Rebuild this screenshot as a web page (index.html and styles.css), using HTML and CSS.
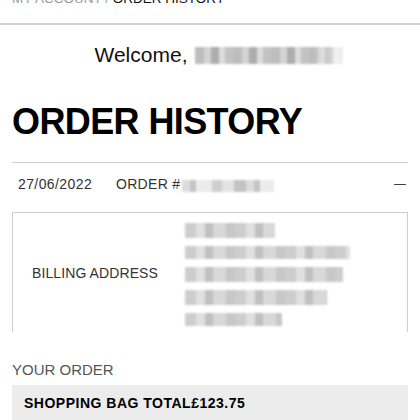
FILE: index.html
```html
<!DOCTYPE html>
<html lang="en">
<head>
<meta charset="utf-8">
<title>Order History</title>
<link rel="stylesheet" href="styles.css">
</head>
<body>
  <nav class="crumbs"><span class="crumb-muted">MY ACCOUNT / </span><span class="crumb-current">ORDER HISTORY</span></nav>
  <div class="rule"></div>
  <main class="page">
    <p class="welcome">Welcome, <span class="blur blur-name"></span></p>
    <h1 class="title">ORDER HISTORY</h1>
    <section class="order">
      <div class="order-head">
        <span class="order-date">27/06/2022</span>
        <span class="order-no">ORDER # <span class="blur blur-no"></span></span>
        <span class="toggle"></span>
      </div>
      <div class="billing">
        <div class="billing-label">BILLING ADDRESS</div>
        <div class="address">
          <span class="blur line l1"></span>
          <span class="blur line l2"></span>
          <span class="blur line l3"></span>
          <span class="blur line l4"></span>
          <span class="blur line l5"></span>
        </div>
      </div>
      <h2 class="your-order">YOUR ORDER</h2>
      <div class="total-bar">SHOPPING BAG TOTAL£123.75</div>
    </section>
  </main>
</body>
</html>
```

FILE: styles.css
```css
* { box-sizing: border-box; }
html, body { margin: 0; padding: 0; background: #fff; }
body {
  font-family: "Liberation Sans", Arial, Helvetica, sans-serif;
  color: #111;
  width: 420px;
  overflow: hidden;
}
.crumbs {
  margin-top: -9px;
  padding-left: 12px;
  font-size: 13.5px;
  line-height: 16px;
  white-space: nowrap;
}
.crumb-muted { color: #9a9a9a; }
.crumb-current { color: #111; }
.rule {
  margin-top: 16px;
  height: 2px;
  background: #d2d2d2;
}
.page { padding: 0 12px; }
.welcome {
  margin: 18px 0 0;
  font-size: 21px;
  line-height: 24px;
  display: flex;
  justify-content: center;
  align-items: center;
  gap: 8px;
  padding-left: 18px;
  color: #111;
}
.blur {
  display: inline-block;
  filter: blur(1.2px);
}
.blur-name {
  width: 148px;
  height: 17px;
  background:
    linear-gradient(90deg, rgba(255,255,255,0) 0 80%, rgba(255,255,255,0.75) 100%),
    repeating-linear-gradient(90deg, #bdbdbd 0 9px, #d3d3d3 9px 16px, #adadad 16px 24px, #dcdcdc 24px 30px, #c3c3c3 30px 38px);
}
.title {
  margin: 35px 0 0;
  font-size: 36px;
  line-height: 40px;
  font-weight: 700;
  letter-spacing: -0.6px;
  color: #000;
}
.order {
  margin-top: 20px;
  border-top: 1px solid #cfcfcf;
}
.order-head {
  display: flex;
  align-items: center;
  padding: 13px 2px 0 6px;
  font-size: 14px;
  line-height: 16px;
  color: #333;
}
.order-date { letter-spacing: 0.4px; width: 98px; }
.order-no { display: flex; align-items: center; gap: 2px; letter-spacing: 0.3px; }
.blur-no {
  width: 92px;
  height: 12px;
  margin-top: 4px;
  background: repeating-linear-gradient(90deg, #dcdcdc 0 8px, #c4c4c4 8px 14px, #ececec 14px 30px, #cfcfcf 30px 40px, #e4e4e4 40px 52px, #c2c2c2 52px 64px);
}
.toggle {
  margin-left: auto;
  width: 12px;
  height: 1px;
  background: #444;
}
.billing {
  margin-top: 20px;
  height: 120px;
  border: 1px solid #cfcfcf;
  border-bottom: none;
  display: flex;
  align-items: center;
  padding-left: 19px;
}
.billing-label {
  width: 153px;
  font-size: 14px;
  line-height: 16px;
  color: #333;
  letter-spacing: 0.1px;
}
.address {
  display: flex;
  flex-direction: column;
  gap: 8px;
  padding-top: 4px;
}
.line {
  height: 13px;
  background: repeating-linear-gradient(90deg, #cdcdcd 0 11px, #e0e0e0 11px 20px, #c0c0c0 20px 28px, #d8d8d8 28px 41px, #c7c7c7 41px 50px);
}
.l1 { width: 90px; height: 15px; }
.l2 { width: 165px; }
.l3 { width: 158px; height: 15px; }
.l4 { width: 142px; height: 15px; }
.l5 { width: 97px; }
.your-order {
  margin: 29px 0 0;
  font-size: 15px;
  line-height: 18px;
  font-weight: 400;
  color: #555;
}
.total-bar {
  margin-top: 6px;
  background: #ececec;
  padding: 10px 12px 14px;
  font-size: 14px;
  line-height: 16px;
  font-weight: 700;
  letter-spacing: 0.5px;
  color: #000;
}
```
